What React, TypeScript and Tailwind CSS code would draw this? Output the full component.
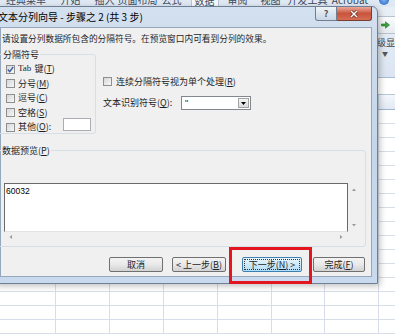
import type { ReactNode } from "react"

const tabs = [
  { t: "经典菜单", w: "w-[52px]" },
  { t: "开始", w: "w-[37px]" },
  { t: "插入", w: "w-[31px]" },
  { t: "页面布局", w: "w-[35px]" },
  { t: "公式", w: "w-[33px]" },
  { t: "数据", w: "w-[33px]", on: true },
  { t: "审阅", w: "w-[33px]" },
  { t: "视图", w: "w-[33px]" },
  { t: "开发工具", w: "w-[41px]" },
  { t: "Acrobat", w: "w-[44px]" },
]

const cols = ["w-[56px]", "w-[54px]", "w-[54px]", "w-[54px]", "w-[54px]", "w-[53px]", "w-[54px]", "w-[54px]"]

function Check({ on }: { on?: boolean }) {
  return (
    <span className="flex h-[9px] w-[9px] shrink-0 items-center justify-center border border-[#8e8f8f] bg-linear-to-br from-[#d6d7d9] to-[#f7f7f7]">
      {on && (
        <svg width="7" height="7" viewBox="0 0 7 7">
          <path d="M0.8 3.6 L2.7 5.6 L6.2 1" fill="none" stroke="#3d5ea6" strokeWidth="1.4" />
        </svg>
      )}
    </span>
  )
}

function Btn({ className, children, focus }: { className: string; children: ReactNode; focus?: boolean }) {
  return (
    <div
      className={
        focus
          ? `${className} flex h-[15px] items-center justify-center rounded-[2px] border border-[#3c7fb1] bg-linear-to-b from-[#eaf6fd] to-[#b2ddf6] p-[1px]`
          : `${className} flex h-[15px] items-center justify-center rounded-[2px] border border-[#707070] bg-linear-to-b from-[#f3f3f3] via-[#e9e9e9] to-[#d2d2d2]`
      }
    >
      {focus ? (
        <span className="flex h-full w-full items-center justify-center border border-dotted border-[#333]">{children}</span>
      ) : (
        children
      )}
    </div>
  )
}

function Tri({ dir }: { dir: "up" | "down" | "left" | "right" }) {
  const d = {
    up: "M1 4 L3 1.5 L5 4 Z",
    down: "M1 2 L3 4.5 L5 2 Z",
    left: "M4 1 L1.5 3 L4 5 Z",
    right: "M2 1 L4.5 3 L2 5 Z",
  }[dir]
  return (
    <svg width="6" height="6" viewBox="0 0 6 6">
      <path d={d} fill="#9a9a9a" />
    </svg>
  )
}

export default function App() {
  return (
    <div className="relative h-[334px] w-[395px] overflow-hidden bg-white font-['Noto_Sans_CJK_SC','Microsoft_YaHei',sans-serif] text-[9px] text-[#1e1e1e]">
      {/* excel window behind */}
      <div className="flex h-full flex-col">
        <div className="flex h-[8px] overflow-hidden bg-[#dfe8f3] text-[10px] leading-[10px] text-[#3b4a5c]">
          {tabs.map((tb) => (
            <div key={tb.t} className={`${tb.w} flex shrink-0 justify-center`}>
              <span className={tb.on ? "-mt-[5px] h-[13px] border border-[#b6c4d6] bg-[#f6f9fd] px-[3px]" : "-mt-[5px] whitespace-nowrap"}>{tb.t}</span>
            </div>
          ))}
          <div className="flex flex-1 justify-center">
            <span className="-mt-[5px] h-[10px] w-[10px] rounded-full bg-radial from-[#7fb0ee] to-[#1f5fc2]" />
          </div>
        </div>
        <div className="flex h-[82px] border-b border-[#a9bcd3] bg-linear-to-b from-[#e9eff7] to-[#dbe5f1]">
          <div className="flex-1" />
          <div className="flex w-[18px] flex-col items-start pt-[9px]">
            <div className="flex h-[18px] w-[20px] items-center rounded-[2px] border border-[#b9c3cf] bg-linear-to-b from-[#fbfcfd] to-[#e6ebf1] pl-[3px]">
              <svg width="9" height="8" viewBox="0 0 9 8">
                <path d="M0.5 3 H4.5 V0.8 L8.5 4 L4.5 7.2 V5 H0.5 Z" fill="#3aa23a" stroke="#21752a" strokeWidth="0.6" />
              </svg>
            </div>
            <span className="mt-[4px] whitespace-nowrap text-[9px] leading-[10px] text-[#444]">级显示</span>
            <span className="ml-[5px] mt-[3px] text-[6px] leading-[6px] text-[#555]">▼</span>
          </div>
        </div>
        <div className="h-[20px] border-b border-[#b7c6d9] bg-white" />
        <div className="flex h-[17px] border-b border-[#9eb6ce] bg-linear-to-b from-[#f4f7fb] to-[#e2e9f3]">
          {cols.map((c, i) => (
            <div key={i} className={`${c} shrink-0 border-r border-[#c5d1df]`} />
          ))}
        </div>
        <div className="flex flex-col">
          {Array.from({ length: 16 }).map((_, r) => (
            <div key={r} className="flex h-[14px] shrink-0">
              {cols.map((c, i) => (
                <div key={i} className={`${c} shrink-0 border-b border-r border-[#d8dee9]`} />
              ))}
            </div>
          ))}
        </div>
      </div>

      {/* dialog window */}
      <div className="absolute left-[-6px] top-[6px] flex h-[278px] w-[384px] flex-col rounded-t-[6px] border border-[#6f8096] bg-linear-to-b from-[#d3e0ef] via-[#c4d6ea] to-[#c9daee] px-[5px] pb-[6px] shadow-[2px_2px_6px_rgba(0,0,0,0.25)]">
        <div className="relative flex h-[20px] items-center">
          <span className="ml-[-2px] whitespace-nowrap text-[10px] leading-[12px] text-black">文本分列向导 - 步骤之 2 (共 3 步)</span>
          <div className="absolute right-0 top-0 flex">
            <div className="flex h-[14px] w-[22px] items-center justify-center rounded-bl-[3px] border border-t-0 border-[#6f7f90] bg-linear-to-b from-[#eef3f8] to-[#c9d6e4] text-[9px] font-bold leading-[9px] text-[#4c5664]">?</div>
            <div className="flex h-[14px] w-[35px] items-center justify-center rounded-br-[3px] border border-l-0 border-t-0 border-[#7a3b33] bg-linear-to-b from-[#e9a899] via-[#c9533d] to-[#d46e52]">
              <svg width="10" height="8" viewBox="0 0 10 8">
                <path d="M2 1 L8 7 M8 1 L2 7" stroke="#5a1c14" strokeWidth="2.6" />
                <path d="M2 1 L8 7 M8 1 L2 7" stroke="#ffffff" strokeWidth="1.5" />
              </svg>
            </div>
          </div>
        </div>

        <div className="flex flex-1 flex-col border border-[#95a7bd] bg-[#f0f0f0]">
          <div className="mt-[5px] h-[11px] whitespace-nowrap pl-[1px] text-[8.7px] leading-[11px]">
            请设置分列数据所包含的分隔符号。在预览窗口内可看到分列的效果。
          </div>

          <div className="mt-[10px] flex">
            <div className="ml-[-4px] flex h-[80px] w-[99px] shrink-0 flex-col rounded-[3px] border border-[#d5dfe5]">
              <span className="-mt-[6.5px] ml-[4px] w-fit bg-[#f0f0f0] px-[1px] leading-[11px]">分隔符号</span>
              <div className="mt-[2.25px] flex flex-col pl-[8px]">
                <div className="flex h-[14.5px] items-center gap-[3px]">
                  <Check on />
                  <span className="font-['Liberation_Serif','Noto_Sans_CJK_SC',serif]">Tab</span>
                  <span>键(<u>T</u>)</span>
                </div>
                <div className="flex h-[14.5px] items-center gap-[3px]">
                  <Check />
                  <span>分号(<u>M</u>)</span>
                </div>
                <div className="flex h-[14.5px] items-center gap-[3px]">
                  <Check />
                  <span>逗号(<u>C</u>)</span>
                </div>
                <div className="flex h-[14.5px] items-center gap-[3px]">
                  <Check />
                  <span>空格(<u>S</u>)</span>
                </div>
                <div className="flex h-[14.5px] items-center gap-[3px]">
                  <Check />
                  <span className="w-[42px]">其他(<u>O</u>):</span>
                  <span className="mt-[-6px] h-[13px] w-[28px] border border-[#abadb3] bg-white" />
                </div>
              </div>
            </div>

            <div className="ml-[7px] flex flex-col pt-[20.5px]">
              <div className="flex h-[14px] items-center gap-[4px]">
                <Check />
                <span>连续分隔符号视为单个处理(<u>R</u>)</span>
              </div>
              <div className="mt-[7.5px] flex h-[14px] items-center">
                <span className="w-[78px]">文本识别符号(<u>Q</u>):</span>
                <div className="flex h-[14px] w-[70px] items-center border border-[#828790] bg-white">
                  <span className="flex-1 pl-[3px] font-['Liberation_Sans',sans-serif] text-[9px] leading-[9px]">"</span>
                  <span className="mr-[1px] flex h-[10px] w-[11px] items-center justify-center border border-[#a3a3a3] bg-linear-to-b from-[#f5f5f5] to-[#dcdcdc]">
                    <svg width="5" height="3" viewBox="0 0 5 3">
                      <path d="M0 0 H5 L2.5 3 Z" fill="#000" />
                    </svg>
                  </span>
                </div>
              </div>
            </div>
          </div>

          <div className="ml-[-4px] mt-[16px] flex h-[97px] w-[369px] flex-col rounded-[3px] border border-[#d5dfe5]">
            <span className="-mt-[6.5px] ml-[3px] w-fit bg-[#f0f0f0] px-[1px] leading-[11px]">数据预览(<u>P</u>)</span>
            <div className="ml-[6px] mt-[27.5px] flex">
              <div className="h-[49px] w-[344px] border border-b-[#e3e3e3] border-l-[#6a6a6a] border-r-[#6a6a6a] border-t-[#6a6a6a] bg-white pl-[1px] pt-[2px] font-['Liberation_Sans',sans-serif] text-[8.5px] leading-[10px] text-black">
                60032
              </div>
              <div className="flex h-[49px] w-[12px] flex-col items-center justify-between py-[4px]">
                <Tri dir="up" />
                <Tri dir="down" />
              </div>
            </div>
            <div className="ml-[6px] flex h-[10px] w-[344px] items-center justify-between px-[4px]">
              <Tri dir="left" />
              <Tri dir="right" />
            </div>
          </div>

          <div className="mt-[10px] flex pl-[108px]">
            <Btn className="w-[54px]">取消</Btn>
            <Btn className="ml-[9px] w-[54px]">
              <span>
                &lt; 上一步(<u>B</u>)
              </span>
            </Btn>
            <Btn className="ml-[16px] w-[60px]" focus>
              <span>
                下一步(<u>N</u>) &gt;
              </span>
            </Btn>
            <Btn className="ml-[11px] w-[52px]">
              <span>
                完成(<u>F</u>)
              </span>
            </Btn>
          </div>
        </div>
      </div>

      {/* red highlight */}
      <div className="absolute left-[229px] top-[247px] h-[37px] w-[83px] border-[3px] border-[#e3151f]" />
    </div>
  )
}
